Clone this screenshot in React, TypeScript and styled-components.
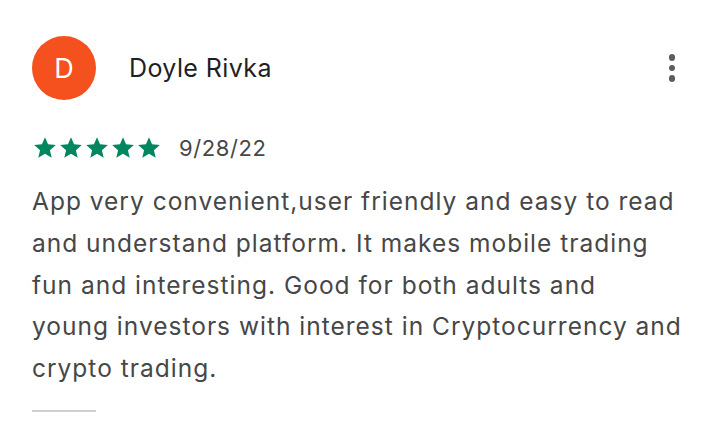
import React from 'react';
import styled, { createGlobalStyle } from 'styled-components';

const GlobalStyle = createGlobalStyle`
    body {
        margin: 0;
        background: #ffffff;
        font-family: Inter, Roboto, "Noto Sans", sans-serif;
    }
`;

const Card = styled.article`
    width: 720px;
    height: 430px;
    box-sizing: border-box;
    padding: 36px 12px 0 32px;
    overflow: hidden;
`;

const Header = styled.header`
    display: flex;
    align-items: center;
    height: 64px;
    padding-right: 12px;
`;

const Avatar = styled.div`
    width: 64px;
    height: 64px;
    border-radius: 50%;
    background: #f4511e;
    color: #ffffff;
    display: flex;
    align-items: center;
    justify-content: center;
    font-size: 27px;
    flex-shrink: 0;
`;

const Name = styled.span`
    margin-left: 33px;
    font-size: 25px;
    letter-spacing: 0.4px;
    color: #1f1f1f;
    flex: 1;
`;

const MoreButton = styled.button`
    width: 24px;
    height: 40px;
    border: none;
    background: none;
    padding: 0;
    display: flex;
    flex-direction: column;
    align-items: center;
    justify-content: center;
    gap: 4px;
    margin-right: 12px;
`;

const Dot = styled.span`
    width: 6.5px;
    height: 6.5px;
    border-radius: 50%;
    background: #5e5e5e;
`;

const Meta = styled.div`
    display: flex;
    align-items: center;
    margin-top: 34px;
    height: 28px;
`;

const Stars = styled.div`
    display: flex;
`;

const Date = styled.span`
    margin-left: 17px;
    font-size: 22px;
    letter-spacing: 0.6px;
    color: #474747;
`;

const Body = styled.p`
    margin: 19px 0 0 0;
    font-size: 24.5px;
    letter-spacing: 1px;
    line-height: 41.8px;
    color: #474747;
`;

const Divider = styled.hr`
    width: 64px;
    height: 2px;
    border: none;
    background: #d0d0d0;
    margin: 20px 0 0 0;
`;

const lines = [
    'App very convenient,user friendly and easy to read',
    'and understand platform. It makes mobile trading',
    'fun and interesting. Good for both adults and',
    'young investors with interest in Cryptocurrency and',
    'crypto trading.',
];

function Star() {
    return (
        <svg width="26" height="26" viewBox="0 0 24 24">
            <path
                fill="#01875f"
                d="M12 17.27L18.18 21l-1.64-7.03L22 9.24l-7.19-.61L12 2 9.19 8.63 2 9.24l5.46 4.73L5.82 21z"
            />
        </svg>
    );
}

export default function App() {
    return (
        <>
            <GlobalStyle />
            <Card>
                <Header>
                    <Avatar>D</Avatar>
                    <Name>Doyle Rivka</Name>
                    <MoreButton aria-label="More">
                        <Dot />
                        <Dot />
                        <Dot />
                    </MoreButton>
                </Header>
                <Meta>
                    <Stars>
                        {[0, 1, 2, 3, 4].map((i) => (
                            <Star key={i} />
                        ))}
                    </Stars>
                    <Date>9/28/22</Date>
                </Meta>
                <Body>
                    {lines.map((line, i) => (
                        <React.Fragment key={i}>
                            {line}
                            {i < lines.length - 1 && <br />}
                        </React.Fragment>
                    ))}
                </Body>
                <Divider />
            </Card>
        </>
    );
}
